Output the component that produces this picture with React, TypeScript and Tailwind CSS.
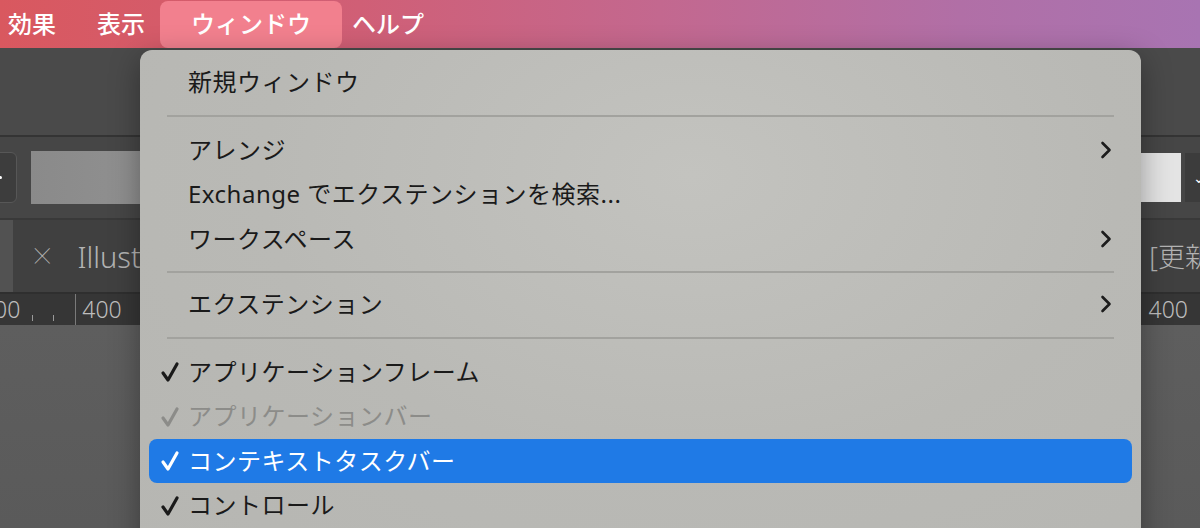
import React from 'react';

const Check = ({ color }: { color: string }) => (
  <svg width="20" height="22" viewBox="0 0 20 22" fill="none" stroke={color} strokeWidth="3.2" strokeLinecap="round" strokeLinejoin="round">
    <path d="M3 12 L8 19 L17 3" />
  </svg>
);

const Chevron = () => (
  <svg width="12" height="18" viewBox="0 0 12 18" fill="none" stroke="#1c1c1c" strokeWidth="2.6" strokeLinecap="round" strokeLinejoin="round">
    <path d="M2.5 2 L9.5 9 L2.5 16" />
  </svg>
);

type Item =
  | { kind: 'sep'; h: string }
  | { kind: 'item'; label: string; sub?: boolean; check?: boolean; disabled?: boolean; active?: boolean };

const items: Item[] = [
  { kind: 'item', label: '新規ウィンドウ' },
  { kind: 'sep', h: 'h-[23px]' },
  { kind: 'item', label: 'アレンジ', sub: true },
  { kind: 'item', label: 'Exchange でエクステンションを検索...' },
  { kind: 'item', label: 'ワークスペース', sub: true },
  { kind: 'sep', h: 'h-[21px]' },
  { kind: 'item', label: 'エクステンション', sub: true },
  { kind: 'sep', h: 'h-[23px]' },
  { kind: 'item', label: 'アプリケーションフレーム', check: true },
  { kind: 'item', label: 'アプリケーションバー', check: true, disabled: true },
  { kind: 'item', label: 'コンテキストタスクバー', check: true, active: true },
  { kind: 'item', label: 'コントロール', check: true },
];

function MenuRow({ item }: { item: Item }) {
  if (item.kind === 'sep') {
    return (
      <div className={item.h + ' flex items-center px-[18px]'}>
        <div className="h-[2px] w-full bg-[#a2a29e]" />
      </div>
    );
  }
  const color = item.active ? '#ffffff' : item.disabled ? '#8c8c89' : '#1a1a1a';
  return (
    <div
      className={
        'h-[44.5px] flex items-center rounded-[8px] pr-[20px] ' +
        (item.active ? 'bg-[#1f7ae6]' : '')
      }
    >
      <div className="w-[39px] flex justify-end pr-[8px] pt-[1px]">
        {item.check && <Check color={color} />}
      </div>
      <span className="text-[24px] leading-none tracking-[0.5px]" style={{ color }}>
        {item.label}
      </span>
      {item.sub && (
        <span className="ml-auto flex items-center">
          <Chevron />
        </span>
      )}
    </div>
  );
}

export default function App() {
  return (
    <div
      className="relative w-[1200px] h-[528px] overflow-hidden bg-[#5b5b5b] flex flex-col"
      style={{ fontFamily: '"Noto Sans", "Noto Sans CJK JP", sans-serif' }}
    >
      {/* menu bar */}
      <div className="h-[48px] shrink-0 flex items-center bg-[linear-gradient(90deg,#d9585f_0%,#d05f76_30%,#c3688f_55%,#b16fa6_80%,#a874b2_100%)] text-white text-[24px] font-medium">
        <span className="ml-[8px]">効果</span>
        <span className="ml-[41px]">表示</span>
        <span className="ml-[15px] h-[47px] w-[182px] rounded-[8px] bg-[#f2808e] flex items-center justify-center">
          ウィンドウ
        </span>
        <span className="ml-[10px]">ヘルプ</span>
      </div>

      {/* app header */}
      <div className="h-[89px] shrink-0 bg-[#4a4a4a] border-b-2 border-[#343434]" />

      {/* toolbar */}
      <div className="h-[83px] shrink-0 bg-[#464646] flex items-center border-b-2 border-[#393939]">
        <div className="-ml-[10px] w-[27px] h-[51px] rounded-[6px] border border-[#575757] bg-[#3d3d3d] flex items-center justify-end pr-[14px]">
          <div className="w-[3px] h-[3px] rounded-full bg-white" />
        </div>
        <div className="ml-[14px] w-[300px] h-[53px] bg-[linear-gradient(90deg,#8a8a8a,#9a9a9a)]" />
        <div className="ml-auto w-[41px] h-[49px] bg-[#e4e4e4]" />
        <div className="ml-[4px] w-[30px] h-[49px] -mr-[15px] bg-[#3c3c3c] flex items-center pl-[8px] text-white text-[14px]">
          ⌄
        </div>
      </div>

      {/* tabs */}
      <div className="h-[72px] shrink-0 bg-[#404040] flex items-center text-[#b3b3b3]">
        <div className="w-[13px] h-full bg-[#525252]" />
        <span className="ml-[19px] text-[36px] font-thin leading-none">×</span>
        <span className="ml-[25px] w-[63px] overflow-hidden whitespace-nowrap text-[29px] font-light leading-none">Illustration</span>
        <span className="ml-auto text-[27px] font-light leading-none whitespace-nowrap -mr-[12px]">· [更新</span>
      </div>

      {/* ruler */}
      <div className="h-[33px] shrink-0 bg-[#363636] border-t-2 border-[#2f2f2f] flex items-center text-[#bdbdbd] text-[23px] font-light leading-none">
        <span className="-ml-[6px]">00</span>
        <span className="ml-[12px] h-[6px] w-px bg-[#9a9a9a] self-end mb-[4px]" />
        <span className="ml-[20px] h-[6px] w-px bg-[#9a9a9a] self-end mb-[4px]" />
        <span className="ml-[21px] h-full w-px bg-[#7a7a7a]" />
        <span className="ml-[6px]">400</span>
        <span className="ml-auto mr-[12px]">400</span>
      </div>

      {/* canvas */}
      <div className="flex-1 bg-[linear-gradient(180deg,#5e5e5e,#5a5a5a)]" />

      {/* window menu */}
      <div className="absolute left-[140px] top-[50px] w-[1001px] h-[500px] rounded-[12px] bg-[radial-gradient(ellipse_at_55%_25%,#c3c3bf_0%,#b9b9b5_55%,#b6b6b2_100%)] shadow-[0_8px_30px_rgba(0,0,0,0.35)] pt-[10px] px-[9px]">
        {items.map((it, i) => (
          <MenuRow key={i} item={it} />
        ))}
      </div>
    </div>
  );
}
